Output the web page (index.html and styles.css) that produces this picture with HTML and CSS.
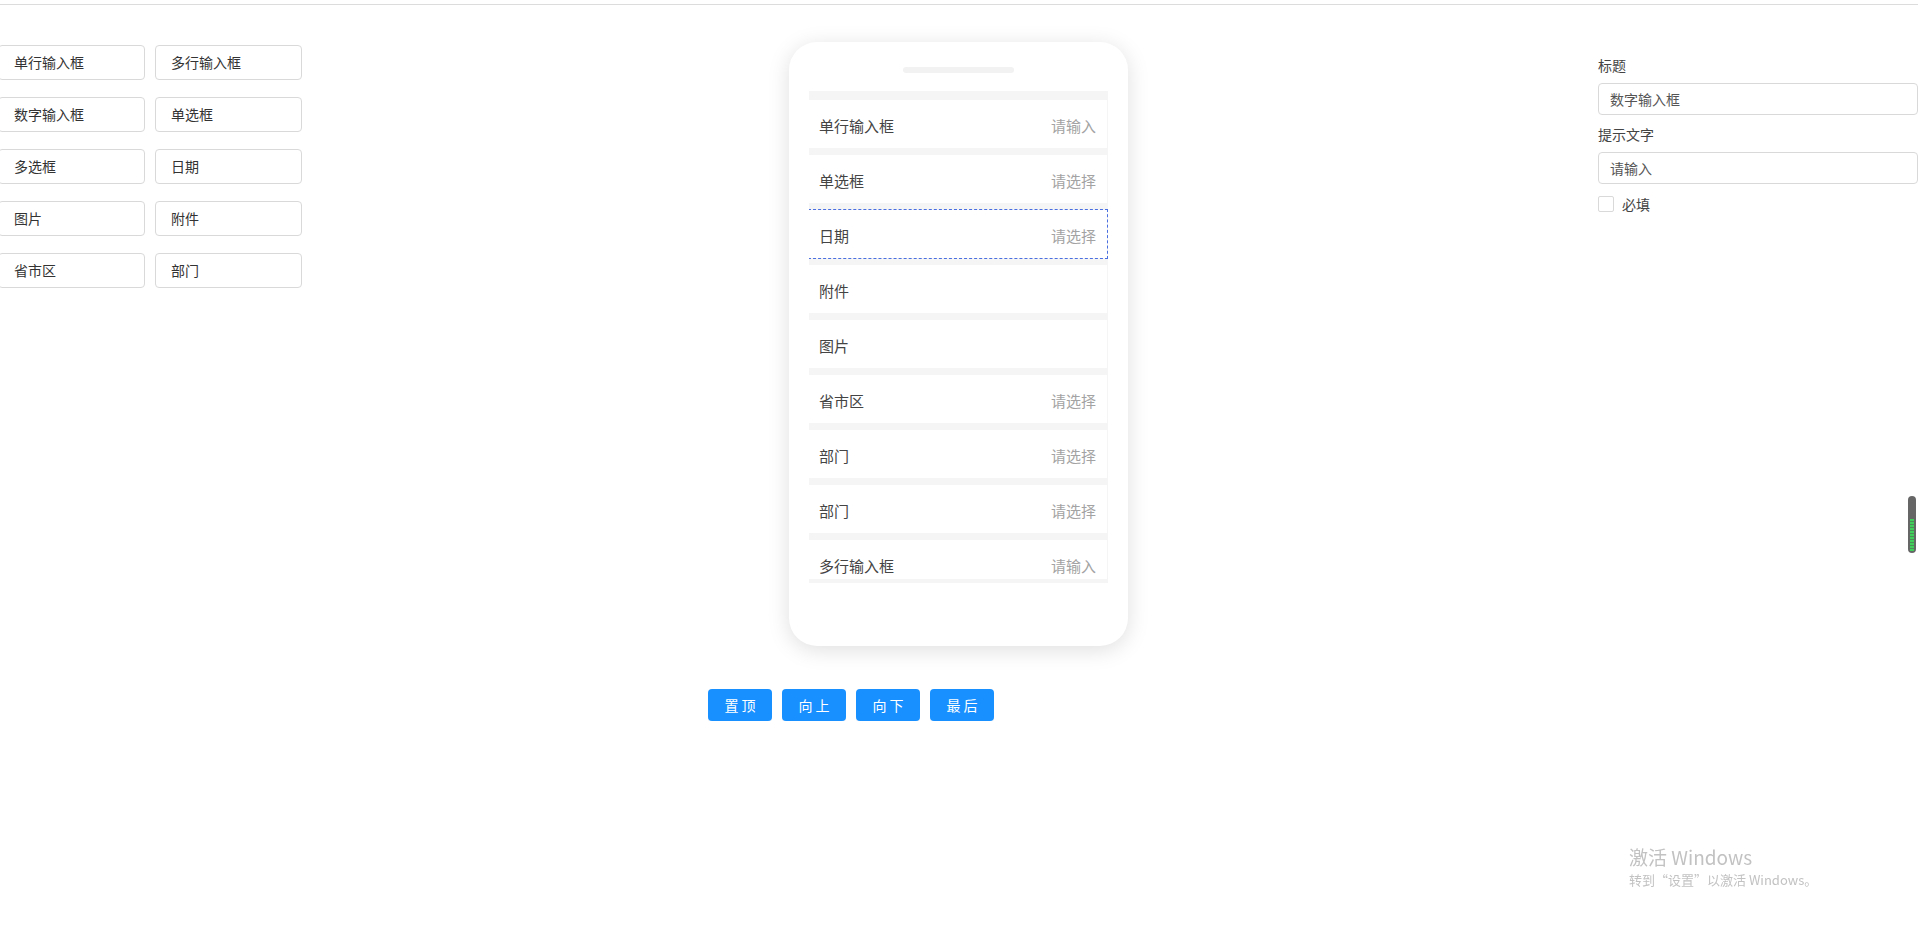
FILE: index.html
```html
<!DOCTYPE html>
<html lang="zh-CN">
<head>
    <meta charset="UTF-8">
    <meta name="viewport" content="width=device-width, initial-scale=1.0">
    <title>表单设计器</title>
    <link rel="stylesheet" href="styles.css">
</head>
<body>
    <div class="topbar"></div>

    <main class="editor">
        <!-- 左侧控件 -->
        <div class="palette">
            <div class="palette-item">单行输入框</div>
            <div class="palette-item">多行输入框</div>
            <div class="palette-item">数字输入框</div>
            <div class="palette-item">单选框</div>
            <div class="palette-item">多选框</div>
            <div class="palette-item">日期</div>
            <div class="palette-item">图片</div>
            <div class="palette-item">附件</div>
            <div class="palette-item">省市区</div>
            <div class="palette-item">部门</div>
        </div>

        <!-- 中间预览 -->
        <div class="stage">
            <div class="phone">
                <div class="phone-notch"></div>
                <div class="field-list">
                    <div class="field"><span class="field-label">单行输入框</span><span class="field-hint">请输入</span></div>
                    <div class="field"><span class="field-label">单选框</span><span class="field-hint">请选择</span></div>
                    <div class="field active"><span class="field-label">日期</span><span class="field-hint">请选择</span></div>
                    <div class="field"><span class="field-label">附件</span></div>
                    <div class="field"><span class="field-label">图片</span></div>
                    <div class="field"><span class="field-label">省市区</span><span class="field-hint">请选择</span></div>
                    <div class="field"><span class="field-label">部门</span><span class="field-hint">请选择</span></div>
                    <div class="field"><span class="field-label">部门</span><span class="field-hint">请选择</span></div>
                    <div class="field"><span class="field-label">多行输入框</span><span class="field-hint">请输入</span></div>
                </div>
            </div>

            <div class="actions">
                <button class="btn">置 顶</button>
                <button class="btn">向 上</button>
                <button class="btn">向 下</button>
                <button class="btn">最 后</button>
            </div>
        </div>

        <!-- 右侧属性 -->
        <div class="props">
            <label class="prop-label">标题</label>
            <div class="prop-input">数字输入框</div>
            <label class="prop-label">提示文字</label>
            <div class="prop-input">请输入</div>
            <div class="prop-check">
                <span class="checkbox"></span>
                <span>必填</span>
            </div>
        </div>
    </main>

    <div class="level-meter"></div>

    <div class="watermark">
        <div class="watermark-title">激活 Windows</div>
        <div class="watermark-sub">转到“设置”以激活 Windows。</div>
    </div>
</body>
</html>
```

FILE: styles.css
```css
* {
    margin: 0;
    padding: 0;
    box-sizing: border-box;
}

body {
    font-family: "Noto Sans CJK SC", "Liberation Sans", sans-serif;
    font-size: 14px;
    color: #333;
    background-color: #fff;
    overflow: hidden;
}

.topbar {
    height: 5px;
    border-bottom: 1px solid #dcdcdc;
}

.editor {
    display: flex;
    align-items: flex-start;
}

/* 左侧控件 */
.palette {
    width: 304px;
    margin-left: -2px;
    padding-top: 40px;
    display: grid;
    grid-template-columns: 147px 147px;
    column-gap: 10px;
    row-gap: 17px;
}

.palette-item {
    height: 35px;
    line-height: 33px;
    padding-left: 15px;
    border: 1px solid #d9d9d9;
    border-radius: 4px;
    font-size: 14px;
    color: #333;
}

/* 中间预览 */
.stage {
    margin-left: 406px;
    padding-top: 37px;
}

.phone {
    width: 339px;
    height: 604px;
    margin-left: 81px;
    padding: 25px 20px 0 20px;
    background-color: #fff;
    border-radius: 28px;
    box-shadow: 0 4px 22px rgba(0, 0, 0, 0.13);
}

.phone-notch {
    width: 111px;
    height: 6px;
    margin: 0 auto 18px;
    background-color: #f2f2f2;
    border-radius: 3px;
}

.field-list {
    height: 492px;
    overflow: hidden;
    padding: 9px 1px 0 0;
    border-bottom: 4px solid #f5f5f5;
    background-color: #f5f5f5;
    display: flex;
    flex-direction: column;
    gap: 7px;
}

.field {
    flex: none;
    height: 48px;
    padding: 3px 11px 0 10px;
    display: flex;
    align-items: center;
    justify-content: space-between;
    background-color: #fff;
    font-size: 15px;
}

.field.active {
    outline: 1px dashed #4a6fe0;
}

.field-label {
    color: #444;
}

.field-hint {
    color: #a3a3a3;
}

.actions {
    display: flex;
    gap: 10px;
    margin-top: 43px;
}

.btn {
    width: 64px;
    height: 32px;
    border: none;
    border-radius: 4px;
    background-color: #1890ff;
    color: #fff;
    font-family: inherit;
    font-size: 14px;
    box-shadow: 0 2px 0 rgba(0, 0, 0, 0.04);
}

/* 右侧属性 */
.props {
    width: 320px;
    margin-left: auto;
    padding-top: 49px;
    display: flex;
    flex-direction: column;
}

.prop-label {
    line-height: 22px;
    color: #444;
    font-size: 14px;
}

.prop-input {
    height: 32px;
    line-height: 30px;
    margin: 7px 0 8px;
    padding-left: 11px;
    border: 1px solid #d9d9d9;
    border-radius: 4px;
    color: #555;
    font-size: 14px;
}

.prop-check {
    display: flex;
    align-items: center;
    gap: 8px;
    margin-top: 2px;
    font-size: 14px;
    color: #444;
}

.checkbox {
    width: 16px;
    height: 16px;
    border: 1px solid #d9d9d9;
    border-radius: 2px;
}

/* 悬浮指示 */
.level-meter {
    position: fixed;
    top: 496px;
    right: 2px;
    width: 8px;
    height: 57px;
    border-radius: 4px;
    background-color: #666;
}

.level-meter::after {
    content: "";
    position: absolute;
    left: 2px;
    right: 2px;
    bottom: 2px;
    height: 32px;
    background: repeating-linear-gradient(to bottom, #3fcf5a 0, #3fcf5a 2px, #4a8f55 2px, #4a8f55 3px);
}

.watermark {
    position: fixed;
    left: 1629px;
    top: 844px;
    color: #c2c2c2;
    font-family: "Noto Sans CJK SC", "Open Sans", sans-serif;
}

.watermark-title {
    font-size: 19px;
    line-height: 26px;
}

.watermark-sub {
    font-size: 13px;
    line-height: 20px;
}
```
